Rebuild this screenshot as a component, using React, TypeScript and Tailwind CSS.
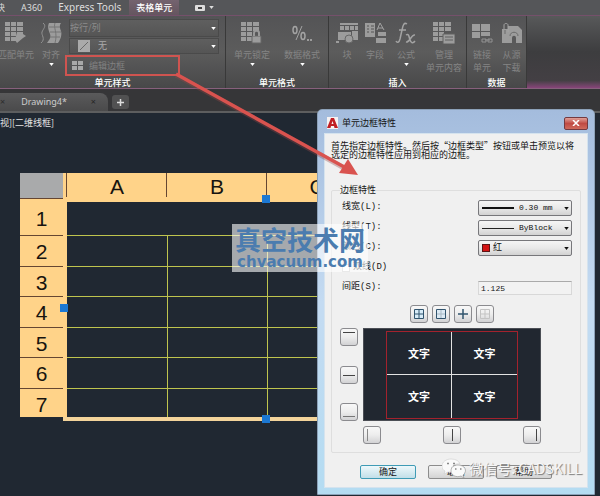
import { useState, type ReactNode } from "react";

const ui = "font-['Noto_Sans_CJK_SC','Noto_Sans',sans-serif]";

const rows = [2, 3, 4, 5, 6, 7];

const borderPresets = [
    { id: "all", label: "所有边框" },
    { id: "outside", label: "外边框" },
    { id: "inside", label: "内边框" },
    { id: "none", label: "无边框" }
];

function Caret({ className = "fill-white" }: { className?: string }) {
    return (
        <svg viewBox="0 0 6 4" className={`w-[5px] h-[3px] ${className}`}>
            <path d="M0 0H6L3 4Z" />
        </svg>
    );
}

function TableGlyph() {
    return <path d="M0 0h5v4H0zM6 0h5v4H6zM12 0h6v4h-6zM0 5h5v4H0zM6 5h5v4H6zM12 5h6v4h-6zM0 10h5v4H0zM6 10h5v4H6zM0 15h5v4H0zM6 15h5v4H6z" />;
}

/* Ribbon drawings share a 22x22 box and a flat grey fill */
function RibbonIcon({ name }: { name: string }) {
    return (
        <svg viewBox="0 0 22 22" className="w-[22px] h-[22px] fill-[#9c9c9c] stroke-none">
            {name === "match" && (
                <>
                    <TableGlyph />
                    <path d="M12 10h6v2l3 2-3 2-6 5-2-3z" />
                </>
            )}
            {name === "align" && (
                <>
                    <path d="M3 1c4 3 0 6-1 9s4 7-1 11" fill="none" stroke="#929292" />
                    <path d="M9 1h12c-2 3-1 5 0 8s0 8-3 12H7c3-4 4-6 3-9S7 5 9 1z" />
                    <path d="M9 5h11M10 10h11M10 15h10M15 1c-2 5 3 9 0 20" fill="none" stroke="#757575" />
                </>
            )}
            {name === "lock" && (
                <>
                    <TableGlyph />
                    <path d="M11 14h9v7h-9z" stroke="#666" />
                    <path d="M13 14v-3c0-3 5-3 5 0v3" fill="none" stroke="#999" strokeWidth="2" />
                </>
            )}
            {name === "percent" && (
                <>
                    <path d="M11 4L5 18" stroke="#a3a3a3" fill="none" />
                    <ellipse cx="4" cy="8" rx="2" ry="3.500" fill="none" stroke="#a3a3a3" strokeWidth="1.500" />
                    <ellipse cx="12" cy="14" rx="2" ry="3.500" fill="none" stroke="#a3a3a3" strokeWidth="1.500" />
                    <path d="M16 17h2v2h-2zM19 17h2v2h-2z" />
                </>
            )}
            {name === "block" && (
                <>
                    <path d="M4 1h18v2H4zM4 4h4v4H4zM9 4h4v4H9zM14 4h4v4h-4zM19 4h3v4h-3zM16 9h6v9h-6zM2 10h13v8H2z" />
                    <path d="M0 19h3v2H0z" />
                    <circle cx="13" cy="17" r="4" stroke="#676767" />
                </>
            )}
            {name === "field" && (
                <>
                    <path d="M1 1h10v14H1zM12 16h10v5H12zM14 10h8v4h-8z" />
                    <path d="M3 4h2M7 4h3M3 7h2M7 7h3M3 10h2M7 10h3" stroke="#555" />
                    <path d="M13 8l3-7 4 7M14 6h5" fill="none" stroke="#a3a3a3" />
                </>
            )}
            {name === "formula" && (
                <path
                    d="M12 2c-3-2-4 1-5 6l-2 9c-1 4-3 4-4 2M4 8h7M11 13c3-2 3 2 4 5s3 4 5 1M20 13c-4-1-5 8-9 7"
                    fill="none"
                    stroke="#a3a3a3"
                    strokeWidth="1.5"
                />
            )}
            {name === "content" && (
                <>
                    <TableGlyph />
                    <path d="M10 12h12v10H10z" stroke="#606060" />
                    <path d="M12 15h8M12 18h8" stroke="#606060" />
                </>
            )}
            {name === "link" && (
                <>
                    <path d="M1 2h8v7H1zM10 2h9v7h-9zM1 10h8v6H1zM10 10h9v4h-9z" />
                    <path d="M11 17h4v3h-4zM17 17h4v3h-4zM14 18h5" fill="none" stroke="#929292" />
                </>
            )}
            {name === "download" && (
                <>
                    <path d="M1 7h6V4h10l4 4v13h-6v-5c0-3-4-3-4 0v5H1z" />
                    <path d="M3 7V3c0-2 4-2 4 0v7" fill="none" stroke="#a3a3a3" />
                    <path d="M4 8v4M9 14c0-5 8-5 8 0" fill="none" stroke="#6a6a6a" />
                </>
            )}
        </svg>
    );
}

function RibbonButton({ icon, lines, caret = false, className }: { icon: string; lines: string[]; caret?: boolean; className: string }) {
    return (
        <button type="button" className={`flex shrink-0 flex-col items-center whitespace-nowrap text-[9px] leading-[13px] text-[#858585] ${className}`}>
            <RibbonIcon name={icon} />
            <span className="mt-[4px]">
                {lines.map((line) => (
                    <span key={line} className="block">{line}</span>
                ))}
            </span>
            {caret && <span className="mt-[2px]"><Caret /></span>}
        </button>
    );
}

function RibbonPanel({ title, className, children }: { title: string; className: string; children: ReactNode }) {
    return (
        <section className={`flex shrink-0 flex-col border-r border-[#393939] bg-linear-to-b from-[#545456] via-[#5c5c5c] to-[#484849] ${className}`}>
            <div className="flex h-[61px] items-start pt-[6px]">{children}</div>
            <h2 className="text-center text-[9px] leading-[11px] font-medium text-white">{title}</h2>
        </section>
    );
}

function RibbonSelect({ label, value, className, children }: { label: string; value: string; className: string; children?: ReactNode }) {
    return (
        <div className="relative">
            <select aria-label={label} className={`block w-full appearance-none border border-[#4a4a4a] bg-linear-to-b from-[#5f5f5f] to-[#555] text-[9px] ${className}`}>
                <option>{value}</option>
            </select>
            {children}
            <span className="pointer-events-none absolute top-0 right-[3px] flex h-full items-center">
                <Caret />
            </span>
        </div>
    );
}

function BorderIcon({ name }: { name: string }) {
    return (
        <svg viewBox="0 0 12 12" className="w-3 h-3" fill="none" stroke="#547087">
            {name === "all" && <path d="M1.5 1.5h9v9h-9zM6 1.5v9M1.5 6h9" fill="#d7ecf8" stroke="#31546e" />}
            {name === "outside" && (
                <>
                    <path d="M1.5 1.5h9v9h-9z" fill="#dceaf4" stroke="#31546e" />
                    <path d="M6 2v8M2 6h8" stroke="#a8b8c4" />
                </>
            )}
            {name === "inside" && <path d="M6 1v10M1 6h10" stroke="#31546e" strokeWidth="1.5" />}
            {name === "none" && <path d="M1.5 1.5h9v9h-9zM6 1.5v9M1.5 6h9" stroke="#c3c3c3" />}
            {name === "top" && <path d="M0 1.5h12" stroke="#444" />}
            {name === "middle" && <path d="M0 6.5h12" stroke="#444" />}
            {name === "bottom" && <path d="M0 10.5h12" stroke="#777" />}
            {name === "left" && <path d="M1.5 0v12" stroke="#888" />}
            {name === "center" && <path d="M6.5 0v12" stroke="#444" />}
            {name === "right" && <path d="M10.5 0v12" stroke="#444" />}
        </svg>
    );
}

function BorderButton({ name, label }: { name: string; label: string }) {
    return (
        <button
            type="button"
            aria-label={label}
            className="flex size-[18px] items-center justify-center rounded-[3px] border border-[#8b8b8f] bg-linear-to-b from-[#f8f8f8] via-[#ededed] to-[#d2d2d4]"
        >
            <BorderIcon name={name} />
        </button>
    );
}

function FormRow({ id, label, children }: { id: string; label: string; children: ReactNode }) {
    return (
        <div className="flex h-4 items-center justify-between">
            <label htmlFor={id}>{label}</label>
            <div className="relative w-[94px]">{children}</div>
        </div>
    );
}

function DialogSelect({ id, value, className, children }: { id: string; value: string; className: string; children: ReactNode }) {
    return (
        <>
            <select
                id={id}
                className={`block h-4 w-full appearance-none rounded-[2px] border border-[#77777b] bg-linear-to-b from-[#f5f5f5] via-[#e9e9e9] to-[#d2d2d2] font-['Liberation_Mono','Noto_Sans_CJK_SC',monospace] text-[8px] leading-[14px] text-[#111] ${className}`}
            >
                <option>{value}</option>
            </select>
            <span className="pointer-events-none absolute inset-0 flex items-center justify-between pr-[3px] pl-[4px]">
                {children}
                <Caret className="fill-[#111]" />
            </span>
        </>
    );
}

function Ribbon() {
    return (
        <header className="text-[#ddd]">
            <nav className="flex h-[16px] items-center overflow-hidden border-b border-[#75506b] bg-[#555659] text-[10px] leading-[15px] whitespace-nowrap">
                <a href="#addins" className="-ml-1 text-[9px]">块</a>
                <a href="#a360" className="ml-4 font-['Noto_Sans',sans-serif] text-[9px]">A360</a>
                <a href="#express" className="ml-4 font-['Noto_Sans',sans-serif]">Express Tools</a>
                <a href="#cell" className="ml-2 bg-linear-to-b from-[#74636f] to-[#65555f] px-[7px] text-[9px] font-medium text-white">表格单元</a>
                <button type="button" aria-label="面板显示" className="ml-4 flex items-center gap-1">
                    <svg viewBox="0 0 10 6" className="w-[10px] h-[6px]">
                        <rect width="10" height="6" rx="1" fill="#ddd" />
                        <rect x="3" y="2" width="4" height="2" fill="#444" />
                    </svg>
                    <Caret className="fill-[#ddd]" />
                </button>
            </nav>

            <div className="flex h-[73px] border-b border-[#87607c] bg-linear-to-b from-[#58595a] via-[#3d3d3f] to-[#454045]">
                <RibbonPanel title="单元样式" className="w-[226px]">
                    <RibbonButton icon="match" lines={["匹配单元"]} className="-ml-1 w-[40px]" />
                    <RibbonButton icon="align" lines={["对齐"]} caret className="w-[30px]" />
                    <div className="-mt-[3px] ml-[3px] flex w-[150px] flex-col gap-px">
                        <RibbonSelect label="单元样式" value="按行/列" className="h-[18px] text-[#8c8c8c]" />
                        <RibbonSelect label="背景填充" value="无" className="h-[16px] pl-7 text-[#aaa]">
                            <svg viewBox="0 0 12 12" className="pointer-events-none absolute top-[2px] left-[9px] size-3">
                                <rect width="12" height="12" fill="#aaa" />
                                <path d="M2 10L10 2" stroke="#6a6a6a" />
                            </svg>
                        </RibbonSelect>
                        <button type="button" className="-ml-1 flex h-[21px] w-[115px] items-center gap-[6px] border-2 border-[#cf5450] pl-[5px] text-[9px] text-[#818181]">
                            <svg viewBox="0 0 11 9" className="w-[11px] h-[9px] fill-[#a8a8a8]">
                                <path d="M0 0h5v4H0zM6 0h5v4H6zM0 5h5v4H0zM6 5h5v4H6z" />
                            </svg>
                            编辑边框
                        </button>
                    </div>
                </RibbonPanel>
                <RibbonPanel title="单元格式" className="w-[103px]">
                    <RibbonButton icon="lock" lines={["单元锁定"]} caret className="w-[52px]" />
                    <RibbonButton icon="percent" lines={["数据格式"]} caret className="w-[48px]" />
                </RibbonPanel>
                <RibbonPanel title="插入" className="w-[138px]">
                    <RibbonButton icon="block" lines={["块"]} className="ml-1 w-[28px]" />
                    <RibbonButton icon="field" lines={["字段"]} className="w-[28px]" />
                    <RibbonButton icon="formula" lines={["公式"]} caret className="w-[34px]" />
                    <RibbonButton icon="content" lines={["管理", "单元内容"]} className="w-[42px]" />
                </RibbonPanel>
                <RibbonPanel title="数据" className="w-[60px]">
                    <RibbonButton icon="link" lines={["链接", "单元"]} className="w-[30px]" />
                    <RibbonButton icon="download" lines={["从源", "下载"]} className="w-[29px]" />
                </RibbonPanel>
                <div className="mt-auto h-[7px] flex-1 bg-linear-to-b from-[#474047] to-[#87447a]" />
            </div>

            <div className="flex h-[24px] items-end border-b-2 border-[#5d5e5f] bg-[#363638] pt-1">
                <div className="flex h-[18px] w-[108px] items-center rounded-tr-lg bg-linear-to-b from-[#5a5a5b] to-[#4a4a4b] font-['Noto_Sans',sans-serif] text-[9px] text-[#ccc]">
                    <span className="text-[#2c2c2c]">×</span>
                    <a href="#drawing4" className="ml-4">Drawing4*</a>
                    <button type="button" aria-label="关闭图形" className="ml-auto mr-3 text-[#262626]">×</button>
                </div>
                <button type="button" aria-label="新图形" className="mb-[2px] ml-1 flex h-[14px] w-[17px] items-center justify-center rounded-[3px] bg-[#515152]">
                    <svg viewBox="0 0 7 7" className="size-[7px]" stroke="#ddd" strokeWidth="1.5">
                        <path d="M3.5 0v7M0 3.5h7" />
                    </svg>
                </button>
            </div>
        </header>
    );
}

function DrawingTable() {
    return (
        <div className="relative w-[347px] font-['Liberation_Sans',Arial,sans-serif] text-[21px] text-[#17130f]">
            <table className="w-full table-fixed border-separate border-spacing-0">
                <thead>
                    <tr className="h-[29px] bg-[#ffd389]">
                        <th className="w-[47px] p-0 align-top">
                            <div className="h-[26px] w-[43px] border-b border-[#654632] bg-[#a9aaab]" />
                        </th>
                        {["A", "B", "C"].map((col) => (
                            <th key={col} scope="col" className="p-0 align-top font-normal">
                                <div className="-ml-px h-[24px] border-l border-[#654632] pt-[2px] leading-6">{col}</div>
                            </th>
                        ))}
                    </tr>
                </thead>
                <tbody>
                    <tr className="h-[34px]">
                        <th scope="row" className="bg-[#ffd389] p-0 font-normal">
                            <div className="h-[34px] w-[43px] border-b border-[#654632] leading-[34px]">1</div>
                        </th>
                        <td colSpan={3} className="border-b border-[#bfc44e]" />
                    </tr>
                    {rows.map((row) => (
                        <tr key={row} className="group">
                            <th scope="row" className="bg-[#ffd389] p-0 font-normal">
                                <div className="h-[30px] w-[43px] border-b border-[#654632] leading-[31px] group-even:h-[31px] group-last:h-[28px] group-last:border-transparent">{row}</div>
                            </th>
                            <td className="border-b border-[#bfc44e] group-last:border-b-0" />
                            <td className="border-b border-l border-[#bfc44e] group-last:border-b-0" />
                            <td className="border-b border-l border-[#bfc44e] group-last:border-b-0" />
                        </tr>
                    ))}
                </tbody>
            </table>
            <div className="ml-[43px] h-1 bg-[#f3d49b]" />
            {/* grips */}
            <span className="absolute top-[22px] left-[242px] size-2 bg-[#1c78d3]" />
            <span className="absolute top-[131px] left-[40px] size-2 bg-[#1c78d3]" />
            <span className="absolute -bottom-[2px] left-[242px] size-2 bg-[#1c78d3]" />
        </div>
    );
}

function BorderDialog() {
    const [spacing, setSpacing] = useState("1.125");

    return (
        <div
            role="dialog"
            aria-labelledby="dialog-title"
            className="absolute top-[109px] right-[5px] w-[278px] rounded-t-[5px] border border-[#8ca1b8] bg-linear-to-b from-[#a4bcdd] via-[#c4dbf2] to-[#b4dcf2] px-[6px] pb-[6px] text-[9px] text-[#151515]"
        >
            <div className="flex h-[23px] items-center pt-[3px] pl-[3px]">
                <svg viewBox="0 0 11 12" className="w-[11px] h-3">
                    <rect width="11" height="12" fill="#f6f2f2" />
                    <path fillRule="evenodd" d="M0 11L4 1h3l4 10H7.500l-.5-2H4l-.5 2zM4.500 7h2l-1-3z" fill="#c11f24" />
                </svg>
                <h1 id="dialog-title" className="ml-1">单元边框特性</h1>
                <button type="button" aria-label="关闭" className="ml-auto flex h-[13px] w-6 items-center justify-center rounded-[2px] border border-[#743a40] bg-linear-to-b from-[#dfa09a] via-[#c04a43] to-[#cf6a5c]">
                    <svg viewBox="0 0 8 6" className="w-2 h-[6px]" stroke="#fff" strokeWidth="1.500">
                        <path d="M1 0l6 6M7 0L1 6" />
                    </svg>
                </button>
            </div>

            <div className="border border-[#d5e3ee] bg-[#f0f0f0] px-[6px] pt-[7px] pb-[8px]">
                <p className="leading-[9px] whitespace-nowrap">
                    首先指定边框特性。然后按“边框类型”按钮或单击预览以将
                    <br />
                    选定的边框特性应用到相应的边框。
                </p>

                <fieldset className="mt-[25px] rounded-[2px] border border-[#dedede] px-[8px] pb-[8px]">
                    <legend className="leading-[12px]">边框特性</legend>
                    <div className="flex flex-col gap-1 pt-[4px] pl-[2px] font-['Liberation_Mono','Noto_Sans_CJK_SC',monospace]">
                        <FormRow id="lineweight" label="线宽(L):">
                            <DialogSelect id="lineweight" value="0.30 mm" className="pl-[40px]">
                                <span className="h-[2px] w-8 bg-[#111]" />
                            </DialogSelect>
                        </FormRow>
                        <FormRow id="linetype" label="线型(T):">
                            <DialogSelect id="linetype" value="ByBlock" className="pl-[40px]">
                                <span className="h-px w-8 bg-[#222]" />
                            </DialogSelect>
                        </FormRow>
                        <FormRow id="color" label="颜色(C):">
                            <DialogSelect id="color" value="红" className="pl-[14px] text-[9px]">
                                <span className="size-2 border border-[#5c1515] bg-[#d31313]" />
                            </DialogSelect>
                        </FormRow>
                        <label className="flex h-4 items-center gap-[3px]">
                            <input type="checkbox" className="size-2 appearance-none border border-[#c9c9c9] bg-white" />
                            双线(D)
                        </label>
                        <FormRow id="spacing" label="间距(S):">
                            <input
                                id="spacing"
                                value={spacing}
                                onChange={(e) => setSpacing(e.target.value)}
                                className="block h-[14px] w-full border border-[#d8d8d8] border-t-[#aaa] bg-[#f2f2f2] pl-[2px] text-[8px]"
                            />
                        </FormRow>
                    </div>

                    <div className="mt-[9px] grid grid-cols-[18px_178px] gap-x-[5px] gap-y-[5px]">
                        <div className="col-start-2 flex justify-center gap-1">
                            {borderPresets.map((preset) => (
                                <BorderButton key={preset.id} name={preset.id} label={preset.label} />
                            ))}
                        </div>
                        <div className="col-start-1 flex flex-col justify-between">
                            <BorderButton name="top" label="上边框" />
                            <BorderButton name="middle" label="水平内边框" />
                            <BorderButton name="bottom" label="下边框" />
                        </div>
                        <div className="h-[93px] border border-[#4b4e55] bg-[#212730] px-[22px] pt-[2px] pb-px">
                            <div className="grid h-full grid-cols-2 grid-rows-2 border border-[#a3222d] text-[11px] font-bold text-white">
                                <span className="flex items-center justify-center border-r border-b border-[#e3e3e3]">文字</span>
                                <span className="flex items-center justify-center border-b border-[#e3e3e3]">文字</span>
                                <span className="flex items-center justify-center border-r border-[#e3e3e3]">文字</span>
                                <span className="flex items-center justify-center">文字</span>
                            </div>
                        </div>
                        <div className="col-start-2 flex justify-between">
                            <BorderButton name="left" label="左边框" />
                            <BorderButton name="center" label="垂直内边框" />
                            <BorderButton name="right" label="右边框" />
                        </div>
                    </div>
                </fieldset>

                <div className="mt-[12px] flex gap-3 pl-[29px] leading-[12px]">
                    <button type="button" className="h-[14px] w-14 rounded-[2px] border border-[#3f9bb5] bg-linear-to-b from-[#eef8fb] to-[#c2dfe8]">确定</button>
                    <button type="button" className="h-[14px] w-14 rounded-[2px] border border-[#8c8c8c] bg-linear-to-b from-[#f3f3f3] to-[#d3d3d3]">取消</button>
                    <button type="button" className="h-[14px] w-14 rounded-[2px] border border-[#8c8c8c] bg-linear-to-b from-[#f3f3f3] to-[#d3d3d3]">帮助</button>
                </div>
            </div>

            {/* channel signature over the footer buttons */}
            <div className="absolute right-[12px] bottom-4 flex items-center gap-[3px] text-[14px] leading-[18px] whitespace-nowrap text-[#f7f7f7] [text-shadow:1px_1px_1px_#777]">
                <svg viewBox="0 0 24 20" className="w-6 h-5">
                    <path d="M9 1C4 1 0 4 0 8c0 3 1 4 3 5l-1 3 4-2 4 0c-2-6 3-9 8-8-1-3-4-5-9-5z" fill="#fafafa" stroke="#c5c5c5" strokeWidth=".5" />
                    <path d="M16 7c-4 0-7 2-7 6s5 7 10 5l3 2-1-3c5-4 2-10-5-10z" fill="#fafafa" stroke="#999" strokeWidth=".7" />
                    <path d="M5 5.500h2M11 5.500h2M13 11h1.500M18 11h1.500" stroke="#888" strokeWidth="1.500" />
                </svg>
                <span>微信号: CADSKILL</span>
            </div>
        </div>
    );
}

export default function App() {
    return (
        <div className={`relative flex min-h-screen flex-col overflow-hidden bg-[#202832] ${ui}`}>
            <Ribbon />

            <main className="flex-1">
                <p className="h-[60px] pt-1 text-[9px] leading-[12px] text-[#e4e4e4]">视][二维线框]</p>
                <div className="pl-5">
                    <DrawingTable />
                </div>
            </main>

            <BorderDialog />

            {/* Callout arrow from the ribbon command to the dialog */}
            <svg width="200" height="120" viewBox="0 0 200 120" className="pointer-events-none absolute top-[66px] left-[170px]">
                <path d="M6 9L176 103" stroke="#944746" strokeWidth="5" opacity=".35" />
                <path d="M6 8L176 102" stroke="#d9534f" strokeWidth="3.500" />
                <path d="M188 109L169 107L178 93Z" fill="#d9534f" />
            </svg>

            <div className="pointer-events-none absolute top-[224px] left-[232px] flex h-12 w-[136px] flex-col items-center bg-white/60 font-bold whitespace-nowrap text-[#4b7caf]">
                <span className="text-[26px] leading-[30px]">真空技术网</span>
                <span className="font-['DejaVu_Sans',sans-serif] text-[15px] leading-[16px]">chvacuum.com</span>
            </div>
        </div>
    );
}
